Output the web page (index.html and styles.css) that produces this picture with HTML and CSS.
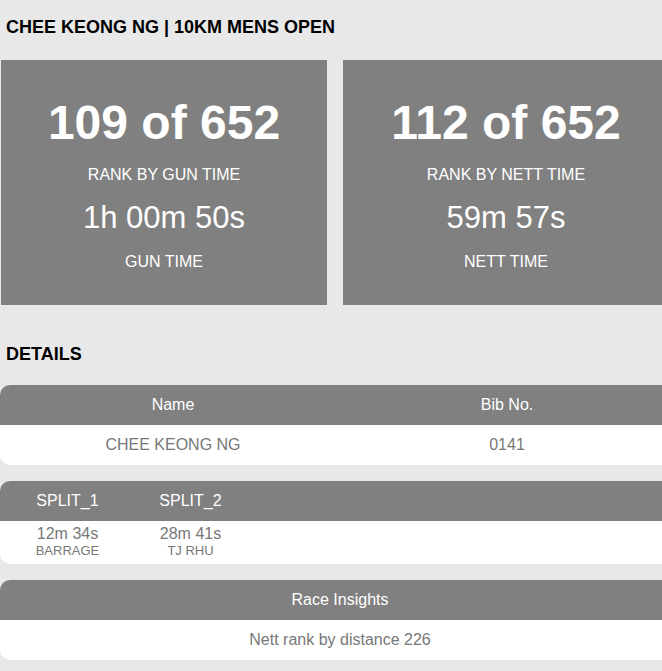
FILE: index.html
```html
<!DOCTYPE html>
<html lang="en">
<head>
  <meta charset="UTF-8">
  <meta name="viewport" content="width=device-width, initial-scale=1.0">
  <title>Race Result</title>
  <link rel="stylesheet" href="styles.css">
</head>
<body>
  <div class="page">
    <h3 class="title">CHEE KEONG NG | 10KM MENS OPEN</h3>

    <div class="cards">
      <div class="card">
        <div class="rank">109 of 652</div>
        <div class="label">RANK BY GUN TIME</div>
        <div class="time">1h 00m 50s</div>
        <div class="label">GUN TIME</div>
      </div>
      <div class="card">
        <div class="rank">112 of 652</div>
        <div class="label">RANK BY NETT TIME</div>
        <div class="time">59m 57s</div>
        <div class="label">NETT TIME</div>
      </div>
    </div>

    <h3 class="title details-title">DETAILS</h3>

    <div class="box">
      <div class="box-head info-grid">
        <div>Name</div>
        <div>Bib No.</div>
      </div>
      <div class="box-body info-grid">
        <div>CHEE KEONG NG</div>
        <div>0141</div>
      </div>
    </div>

    <div class="box">
      <div class="box-head splits">
        <div class="split">SPLIT_1</div>
        <div class="split">SPLIT_2</div>
      </div>
      <div class="box-body splits split-body">
        <div class="split">
          <div class="split-time">12m 34s</div>
          <div class="split-place">BARRAGE</div>
        </div>
        <div class="split">
          <div class="split-time">28m 41s</div>
          <div class="split-place">TJ RHU</div>
        </div>
      </div>
    </div>

    <div class="box">
      <div class="box-head">Race Insights</div>
      <div class="box-body">Nett rank by distance 226</div>
    </div>
  </div>
</body>
</html>
```

FILE: styles.css
```css
html, body {
  overflow-x: hidden;
}
body {
  margin: 0;
  font-family: "Liberation Sans", Arial, sans-serif;
  background-color: #e8e8e8;
}
.page {
  width: 680px;
}
.title {
  margin: 0;
  padding: 16px 6px 0;
  font-size: 18px;
  line-height: 22px;
  font-weight: bold;
  color: #000;
}
.cards {
  display: flex;
  gap: 16px;
  padding-left: 1px;
  margin-top: 22px;
}
.card {
  width: 326px;
  padding: 35px 0 33px;
  background-color: #808080;
  color: #fff;
  text-align: center;
}
.rank {
  font-size: 48px;
  line-height: 56px;
  font-weight: bold;
  margin-bottom: 14px;
}
.label {
  font-size: 16px;
  line-height: 20px;
}
.time {
  font-size: 31px;
  line-height: 36px;
  margin: 15px 0 16px;
}
.details-title {
  padding-top: 38px;
  margin-bottom: 20px;
}
.box {
  margin-bottom: 16px;
  border-radius: 10px;
  overflow: hidden;
  text-align: center;
  font-size: 16px;
}
.box-head {
  height: 40px;
  line-height: 40px;
  background-color: #808080;
  color: #fff;
}
.box-body {
  height: 40px;
  line-height: 40px;
  background-color: #fff;
  color: #777;
}
.info-grid {
  display: grid;
  grid-template-columns: 346px 322px;
}
.splits {
  display: flex;
  padding-left: 6px;
}
.split {
  width: 123px;
}
.split-body {
  height: auto;
  padding: 4px 0 5px 6px;
  line-height: normal;
}
.split-time {
  line-height: 18px;
}
.split-place {
  font-size: 13px;
  line-height: 16px;
}
```
